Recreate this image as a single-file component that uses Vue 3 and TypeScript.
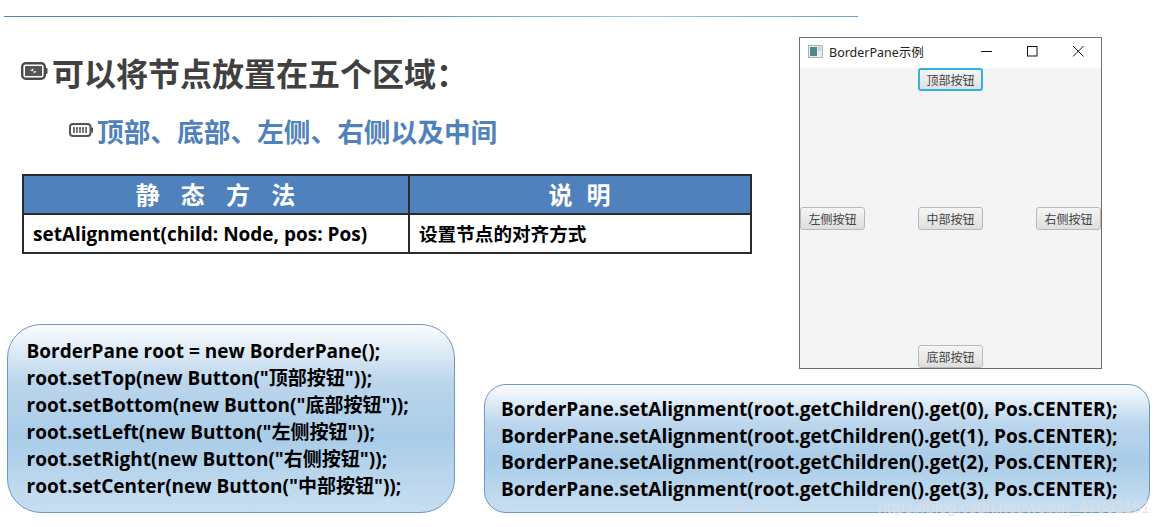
<script setup lang="ts">
const headers = ['静 态 方 法', '说 明']
const leftCode = [
  'BorderPane root = new BorderPane();',
  'root.setTop(new Button("顶部按钮"));',
  'root.setBottom(new Button("底部按钮"));',
  'root.setLeft(new Button("左侧按钮"));',
  'root.setRight(new Button("右侧按钮"));',
  'root.setCenter(new Button("中部按钮"));',
]
const rightCode = [0, 1, 2, 3].map(
  (i) => `BorderPane.setAlignment(root.getChildren().get(${i}), Pos.CENTER);`,
)
</script>

<template>
  <div class="slide">
    <div class="rule"></div>
    <section class="intro">
      <h1 class="title">
        <svg class="bullet-lg" viewBox="0 0 27 18">
          <rect x="1.2" y="1.2" width="22.6" height="15.6" rx="3.5" fill="#fff" stroke="#4a4a4a" stroke-width="2.4" />
          <rect x="24" y="6" width="2.5" height="6" rx="1" fill="#4a4a4a" />
          <rect x="4" y="4" width="17" height="10" fill="#555" />
          <path d="M9 8.5 12.5 6.5 12 9 16 9.5 12.5 11.5 13 9.5Z" fill="#fff" />
        </svg>
        可以将节点放置在五个区域：
      </h1>
      <h2 class="subtitle">
        <svg class="bullet-sm" viewBox="0 0 24 14">
          <rect x="1" y="1" width="20.5" height="12" rx="3" fill="#fff" stroke="#555" stroke-width="2" />
          <rect x="22" y="4.5" width="2" height="5" fill="#555" />
          <path d="M5 4v6M8 4v6M11 4v6M14 4v6M17 4v6" stroke="#555" stroke-width="1.6" />
        </svg>
        顶部、底部、左侧、右侧以及中间
      </h2>
      <table class="methods">
        <thead>
          <tr>
            <th v-for="h in headers" :key="h">{{ h }}</th>
          </tr>
        </thead>
        <tbody>
          <tr>
            <td>setAlignment(child: Node, pos: Pos)</td>
            <td class="cn">设置节点的对齐方式</td>
          </tr>
        </tbody>
      </table>
    </section>

    <div class="window">
      <div class="titlebar">
        <svg class="app-icon" viewBox="0 0 15 13">
          <rect x="0.5" y="0.5" width="14" height="12" fill="#e8eef0" stroke="#a9b4bb" />
          <rect x="2" y="2" width="7" height="9" fill="#4d8a8c" />
          <rect x="10" y="2" width="3" height="4" fill="#c5d3db" />
        </svg>
        <span class="win-title">BorderPane示例</span>
        <div class="controls">
          <svg class="ctl" viewBox="0 0 46 20"><path d="M18 10.500h11" stroke="#111" fill="none" /></svg>
          <svg class="ctl" viewBox="0 0 46 20"><rect x="18.500" y="5.500" width="9.500" height="9.500" stroke="#111" fill="none" /></svg>
          <svg class="ctl" viewBox="0 0 46 20"><path d="M18 5l10.500 10.500M28.500 5 18 15.500" stroke="#111" fill="none" /></svg>
        </div>
      </div>
      <div class="pane">
        <div class="pane-top"><button class="fx focused">顶部按钮</button></div>
        <div class="pane-mid">
          <button class="fx">左侧按钮</button>
          <button class="fx">中部按钮</button>
          <button class="fx">右侧按钮</button>
        </div>
        <div class="pane-bottom"><button class="fx">底部按钮</button></div>
      </div>
    </div>

    <div class="code code-left">
      <div v-for="line in leftCode" :key="line">{{ line }}</div>
    </div>
    <div class="code code-right">
      <div v-for="line in rightCode" :key="line">{{ line }}</div>
      <span class="watermark">https://blog.csdn.net/weixin_47882161</span>
    </div>
  </div>
</template>

<style scoped>
.slide {
  position: relative;
  width: 1157px;
  height: 527px;
  overflow: hidden;
  background: #fff;
  display: grid;
  grid-template-columns: 484px 315px 358px;
  grid-template-rows: 324px 60px 143px;
  font-family: "Open Sans", "Noto Sans CJK SC", sans-serif;
  color: #000;
}
.rule {
  position: absolute;
  left: 4px;
  top: 15.500px;
  width: 854px;
  height: 1px;
  background: linear-gradient(90deg, #4f81bd 0%, #5b8bc6 45%, #a9c3e2 75%, #6f9bd0 100%);
}
.intro {
  grid-column: 1 / 3;
  grid-row: 1;
  padding: 50px 0 0 22px;
}
.title {
  margin: 0 0 0 -1px;
  display: flex;
  align-items: center;
  height: 44px;
  font-size: 32px;
  font-weight: 700;
  color: #404040;
  white-space: nowrap;
}
.bullet-lg {
  width: 27px;
  height: 18px;
  margin: -2px 4px 0 0;
  flex: none;
}
.subtitle {
  margin: 18px 0 0 47px;
  display: flex;
  align-items: center;
  height: 36px;
  font-size: 26.700px;
  font-weight: 700;
  color: #4f81bd;
  white-space: nowrap;
}
.bullet-sm {
  width: 24px;
  height: 14px;
  margin-right: 4px;
  flex: none;
}
.methods {
  margin-top: 26px;
  width: 730px;
  height: 78px;
  border-collapse: collapse;
  table-layout: fixed;
}
.methods th {
  background: #4f81bd;
  color: #fff;
  font-size: 24px;
  line-height: 30px;
  font-weight: 700;
  height: 37px;
  padding: 0;
  border: 2px solid #2b2b2b;
  letter-spacing: 1px;
  word-spacing: 6px;
}
.methods th:first-child {
  width: 384px;
  word-spacing: 13px;
}
.methods th + th {
  border-left-width: 1px;
}
.methods td {
  font-size: 19px;
  line-height: 26px;
  font-weight: 700;
  height: 37px;
  padding: 0 0 0 9px;
  border: 2px solid #2b2b2b;
  white-space: nowrap;
}
.methods td.cn {
  font-size: 18.600px;
  border-left-width: 1px;
}
.window {
  grid-column: 3;
  grid-row: 1 / 3;
  align-self: start;
  margin-top: 37px;
  width: 303px;
  height: 332px;
  box-sizing: border-box;
  border: 1px solid #6e6e6e;
  display: flex;
  flex-direction: column;
  background: #fff;
}
.titlebar {
  height: 30px;
  flex: none;
  box-sizing: border-box;
  padding: 0 0 4px 8px;
  display: flex;
  align-items: center;
  font-family: "Noto Sans", "Noto Sans CJK SC", sans-serif;
  font-size: 12.500px;
  color: #222;
}
.app-icon {
  width: 15px;
  height: 13px;
  margin-right: 6px;
}
.win-title {
  flex: 1;
}
.controls {
  display: flex;
}
.ctl {
  width: 46px;
  height: 20px;
  display: block;
}
.pane {
  flex: 1;
  background: #f4f4f4;
  display: flex;
  flex-direction: column;
  justify-content: space-between;
}
.pane-top,
.pane-bottom {
  display: flex;
  justify-content: center;
}
.pane-mid {
  display: flex;
  justify-content: space-between;
}
.fx {
  box-sizing: border-box;
  width: 65px;
  height: 23px;
  padding: 0;
  border: 1px solid #b9b9b9;
  border-radius: 3px;
  background: linear-gradient(180deg, #f5f5f5, #dedede);
  font-family: "Noto Sans CJK SC", sans-serif;
  font-size: 12px;
  color: #444;
}
.fx.focused {
  border: 2px solid #2ab5e3;
  background: linear-gradient(180deg, #f5f5f5, #e0e0e0);
}
.code {
  position: relative;
  box-sizing: border-box;
  border: 1px solid #6f94c6;
  background: linear-gradient(180deg, #fbfdff 0%, #bcd6ec 30%, #a9cce8 60%, #c9dff1 100%);
  font-weight: 700;
  white-space: nowrap;
}
.code-left {
  grid-column: 1;
  grid-row: 2 / 4;
  margin-left: 7px;
  width: 448px;
  height: 189px;
  border-radius: 34px;
  padding: 13px 0 0 18.500px;
  font-size: 19px;
  line-height: 27px;
}
.code-right {
  grid-column: 2 / 4;
  grid-row: 3;
  width: 666px;
  height: 129px;
  border-radius: 22px;
  padding: 11px 0 0 16px;
  font-size: 19.100px;
  line-height: 26.500px;
}
.watermark {
  position: absolute;
  right: -1px;
  bottom: -6px;
  font-family: "Liberation Sans", sans-serif;
  font-size: 16px;
  font-weight: 400;
  line-height: 20px;
  color: rgba(225, 225, 225, 0.75);
}
</style>
